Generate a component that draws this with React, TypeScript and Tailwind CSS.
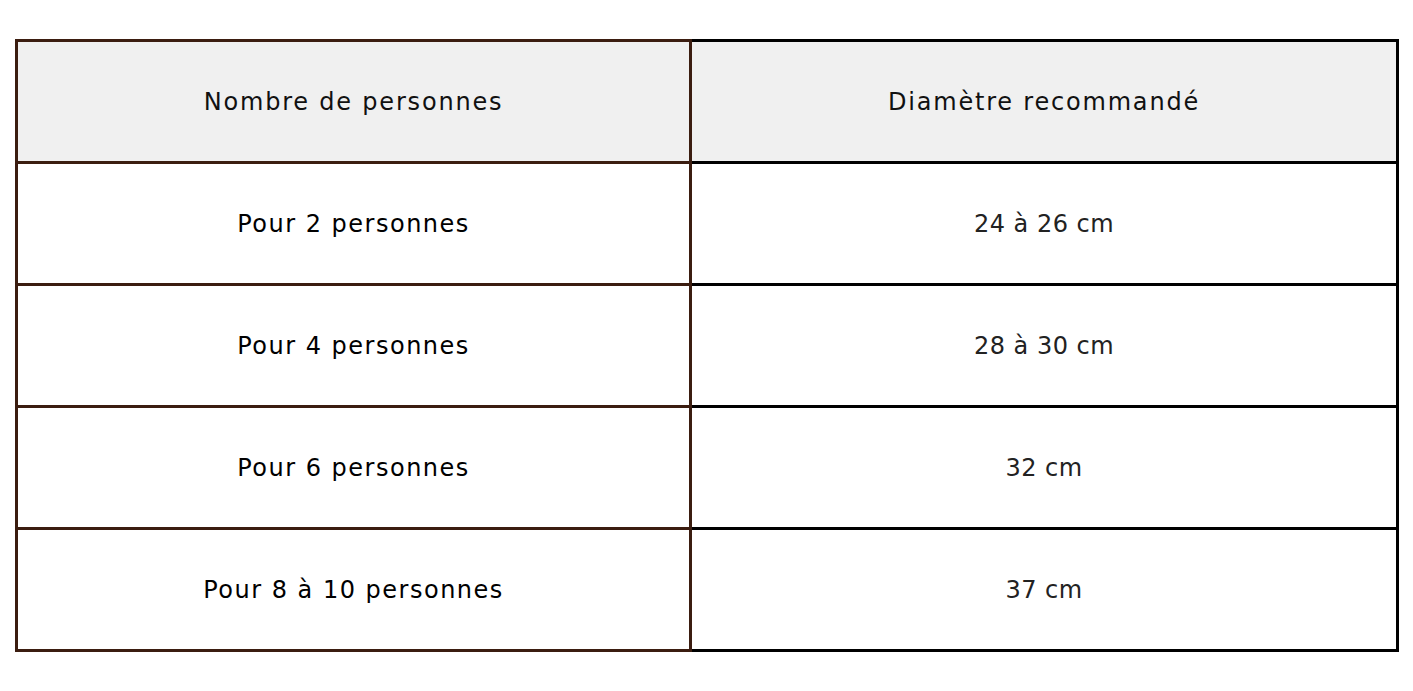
import React from "react";

const rows: [string, string][] = [
  ["Pour 2 personnes", "24 à 26 cm"],
  ["Pour 4 personnes", "28 à 30 cm"],
  ["Pour 6 personnes", "32 cm"],
  ["Pour 8 à 10 personnes", "37 cm"],
];

export default function App() {
  const font = { fontFamily: '"DejaVu Sans", "Open Sans", sans-serif' };
  return (
    <div className="w-[1413px] h-[691px] bg-white pt-[39px] pl-[15px]" style={font}>
      <div className="grid grid-cols-[677px_707px] w-[1384px]">
        <div className="h-[125px] border-[3px] border-[#3b1d10] bg-[#f0f0f0] flex items-center justify-center text-[24px] tracking-[1.8px] text-[#111]">
          Nombre de personnes
        </div>
        <div className="h-[125px] border-y-[3px] border-r-[3px] border-black bg-[#f0f0f0] flex items-center justify-center text-[24px] tracking-[1.8px] text-[#111]">
          Diamètre recommandé
        </div>
        {rows.map(([a, b]) => (
          <React.Fragment key={a}>
            <div className="h-[122px] border-x-[3px] border-b-[3px] border-[#3b1d10] flex items-center justify-center text-[24px] tracking-[1.5px] text-black">
              {a}
            </div>
            <div className="h-[122px] border-r-[3px] border-b-[3px] border-black flex items-center justify-center text-[24px] tracking-[0.5px] text-[#222]">
              {b}
            </div>
          </React.Fragment>
        ))}
      </div>
    </div>
  );
}
